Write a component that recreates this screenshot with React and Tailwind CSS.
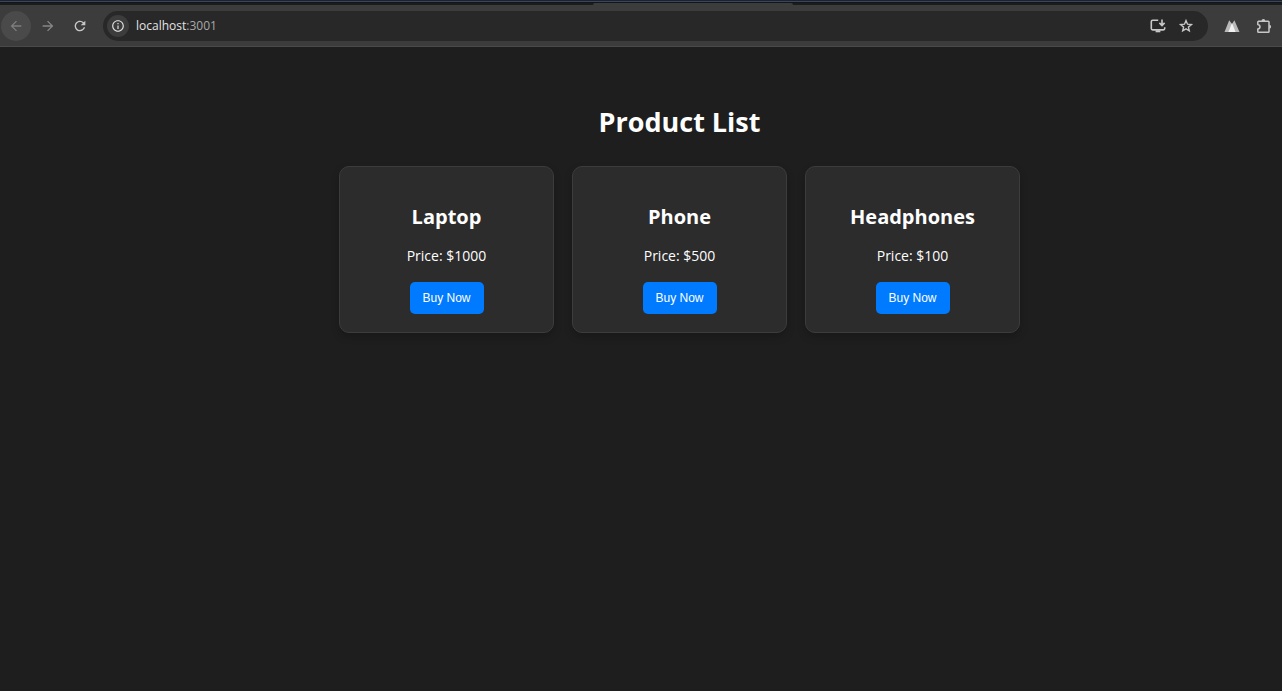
import React from "react";
import { MdArrowBack, MdArrowForward, MdRefresh, MdInfoOutline } from "react-icons/md";

const products = [
  { id: 1, name: "Laptop", price: 1000 },
  { id: 2, name: "Phone", price: 500 },
  { id: 3, name: "Headphones", price: 100 },
];

function PeaksIcon() {
  return (
    <svg width="16" height="14" viewBox="0 0 16 14" aria-hidden="true">
      <path d="M0.5 13 L5.2 1.2 L8 5 L10.4 1.2 L15.5 13 Z" fill="#b9b9b9" />
      <path d="M4.4 13 L8 4 L11.6 13 Z" fill="#f2f2f2" />
    </svg>
  );
}

function InstallIcon() {
  return (
    <svg width="16" height="16" viewBox="0 0 16 16" fill="none" stroke="currentColor" strokeWidth="1.6" aria-hidden="true">
      <path d="M8.2 2.3 H2.6 Q1.3 2.3 1.3 3.6 V10.6 Q1.3 11.9 2.6 11.9 H13.4 Q14.7 11.9 14.7 10.6 V9.2" />
      <path d="M12 1.5 V7.3 M9.4 4.9 L12 7.5 L14.6 4.9" />
      <path d="M5.6 13.3 H10.4" strokeWidth="2" />
    </svg>
  );
}

function StarIcon() {
  return (
    <svg width="16" height="16" viewBox="0 0 16 16" fill="none" stroke="currentColor" strokeWidth="1.4" aria-hidden="true">
      <path d="M8 2.6 L9.5 6.2 L13.4 6.5 L10.4 9.1 L11.3 12.9 L8 10.9 L4.7 12.9 L5.6 9.1 L2.6 6.5 L6.5 6.2 Z" />
    </svg>
  );
}

function PuzzleIcon() {
  return (
    <svg width="16" height="16" viewBox="0 0 16 16" fill="none" stroke="currentColor" strokeWidth="1.5" strokeLinejoin="round" aria-hidden="true">
      <path d="M2 3.2 H12.2 Q13 3.2 13 4 V13.4 Q13 14.2 12.2 14.2 H2.6 Q1.8 14.2 1.8 13.4 V11 Q4 10.6 4 8.7 Q4 6.8 1.8 6.4 V3.2" />
      <path d="M5.5 3 A1.9 1.9 0 0 1 9.3 3 Z M13.2 6.8 A1.9 1.9 0 0 1 13.2 10.6 Z" fill="currentColor" stroke="none" />
    </svg>
  );
}

function TabStrip() {
  return (
    <div className="flex h-[5px] flex-col bg-[#1c1c1f]">
      <div className="h-px bg-[#1b2230]" />
      <div className="h-px bg-[#3d4656]" />
      <div className="h-px bg-[#10151e]" />
      <div className="flex h-[2px] justify-center pl-[104px]">
        <div className="w-[200px] rounded-t-sm bg-[#3c3c3c]" />
      </div>
    </div>
  );
}

function Toolbar() {
  return (
    <header className="flex h-[42px] items-center border-b border-[#4a4a4a] bg-[#3c3c3c] pl-px">
      <button aria-label="Back" className="flex size-[30px] items-center justify-center rounded-full bg-[#4a4a4a] text-[#7e7e7e]">
        <MdArrowBack size={16} />
      </button>
      <button aria-label="Forward" className="ml-[2px] flex size-[30px] items-center justify-center text-[#868686]">
        <MdArrowForward size={16} />
      </button>
      <button aria-label="Reload" className="ml-[2px] flex size-[30px] items-center justify-center text-[#c7c7c7]">
        <MdRefresh size={16} />
      </button>
      <div className="ml-2 flex h-[30px] flex-1 items-center rounded-full bg-[#282828] pl-1">
        <button aria-label="Site information" className="flex size-[22px] items-center justify-center rounded-full bg-[#3c3c3c] text-[#e3e3e3]">
          <MdInfoOutline size={14} />
        </button>
        <a href="http://localhost:3001" className="ml-[7px] flex-1 font-['Open_Sans','Noto_Sans',sans-serif] text-[12px] text-[#a8a8a8]">
          <span className="text-[#e3e3e3]">localhost</span>:3001
        </a>
        <button aria-label="Install app" className="flex size-[28px] items-center justify-center text-[#c7c7c7]">
          <InstallIcon />
        </button>
        <button aria-label="Bookmark" className="mr-2 flex size-[28px] items-center justify-center text-[#c7c7c7]">
          <StarIcon />
        </button>
      </div>
      <button aria-label="Peaks extension" className="ml-2 flex size-[32px] items-center justify-center">
        <PeaksIcon />
      </button>
      <button aria-label="Extensions" className="mr-[2px] flex size-[32px] items-center justify-center text-[#c7c7c7]">
        <PuzzleIcon />
      </button>
    </header>
  );
}

function ProductCard({ product }) {
  return (
    <li className="flex w-[215px] flex-col items-center rounded-[10px] border border-[#3c3c3c] bg-[#2c2c2c] px-4 pt-[35px] pb-[18px] shadow-[0_4px_8px_rgba(0,0,0,0.2)]">
      <h2 className="text-[20px] leading-[30px] font-bold">{product.name}</h2>
      <p className="mt-[12px] text-[14px] leading-6">Price: ${product.price}</p>
      <button className="mt-[14px] h-8 w-[74px] rounded-[5px] bg-[#007bff] font-['Liberation_Sans',Arial,sans-serif] text-[12px]">
        Buy Now
      </button>
    </li>
  );
}

export default function App() {
  return (
    <div className="flex min-h-screen flex-col bg-[#1e1e1e] font-['Open_Sans','Noto_Sans',sans-serif] text-white">
      <TabStrip />
      <Toolbar />
      <main className="flex flex-1 flex-col items-center pt-[55px] pl-[77px]">
        <h1 className="text-[27px] leading-10 font-bold">Product List</h1>
        <ul className="mt-6 flex flex-wrap justify-center gap-[18px]">
          {products.map((product) => (
            <ProductCard key={product.id} product={product} />
          ))}
        </ul>
      </main>
    </div>
  );
}
